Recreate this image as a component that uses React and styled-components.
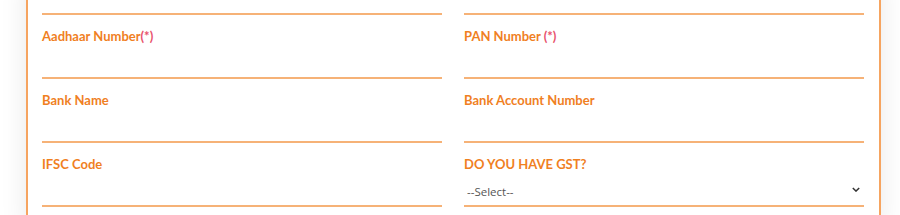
import styled, { createGlobalStyle } from "styled-components";

const GlobalStyle = createGlobalStyle`
  body {
    margin: 0;
    background: #ffffff;
    font-family: "Open Sans", "Noto Sans", sans-serif;
    overflow: hidden;
  }
`;

const fields = [
  { label: "Aadhaar Number", required: "(*)" },
  { label: "PAN Number", required: " (*)" },
  { label: "Bank Name" },
  { label: "Bank Account Number" },
  { label: "IFSC Code" },
  { label: "DO YOU HAVE GST?", select: true },
];

const App = () => {
  return (
    <>
      <GlobalStyle />
      <Page>
        <Card>
          <FormGrid>
            {/* inputs of the row above, scrolled mostly out of view */}
            <Input type="text" aria-label="Mobile Number" />
            <Input type="text" aria-label="Email Address" />
            {fields.map((f) => (
              <Field key={f.label}>
                <Label>
                  {f.label}
                  {f.required && <Req>{f.required}</Req>}
                </Label>
                {f.select ? (
                  <SelectWrap>
                    <Select defaultValue="">
                      <option value="">--Select--</option>
                      <option value="yes">Yes</option>
                      <option value="no">No</option>
                    </Select>
                    <Chevron viewBox="0 0 10 6">
                      <path
                        d="M1 1l4 4 4-4"
                        fill="none"
                        stroke="#333"
                        strokeWidth="1.8"
                      />
                    </Chevron>
                  </SelectWrap>
                ) : (
                  <Input type="text" />
                )}
              </Field>
            ))}
          </FormGrid>
        </Card>
      </Page>
    </>
  );
};

export default App;

const Page = styled.div`
  padding-left: 26px;
  margin-top: -21px;
`;

const Card = styled.div`
  width: 855px;
  box-sizing: border-box;
  border: 2px solid #f6a460;
  background: #fff;
  box-shadow: 0 0 26px rgba(0, 0, 0, 0.09);
  padding: 0 15px 20px 14px;
`;

const FormGrid = styled.div`
  display: grid;
  grid-template-columns: 400px 400px;
  column-gap: 22px;
`;

const Field = styled.div`
  padding-top: 13px;
  display: flex;
  flex-direction: column;
`;

const Label = styled.label`
  font-family: Lato, "Open Sans", sans-serif;
  font-size: 13px;
  line-height: 17px;
  font-weight: 700;
  color: #f0801f;
  white-space: pre;
`;

const Req = styled.span`
  color: #e8506c;
`;

const Input = styled.input`
  height: 34px;
  box-sizing: border-box;
  border: none;
  border-bottom: 2px solid #f6b277;
  outline: none;
  background: transparent;
  font: inherit;
  padding: 0 3px;
`;

const SelectWrap = styled.div`
  position: relative;
`;

const Select = styled.select`
  width: 100%;
  height: 34px;
  box-sizing: border-box;
  appearance: none;
  border: none;
  border-bottom: 2px solid #f6b277;
  border-radius: 0;
  outline: none;
  background: transparent;
  font-family: "Open Sans", "Noto Sans", sans-serif;
  font-size: 11.5px;
  color: #555;
  padding: 4px 3px 0;
`;

const Chevron = styled.svg`
  position: absolute;
  right: 4px;
  top: 14px;
  width: 8px;
  height: 5px;
  pointer-events: none;
`;
